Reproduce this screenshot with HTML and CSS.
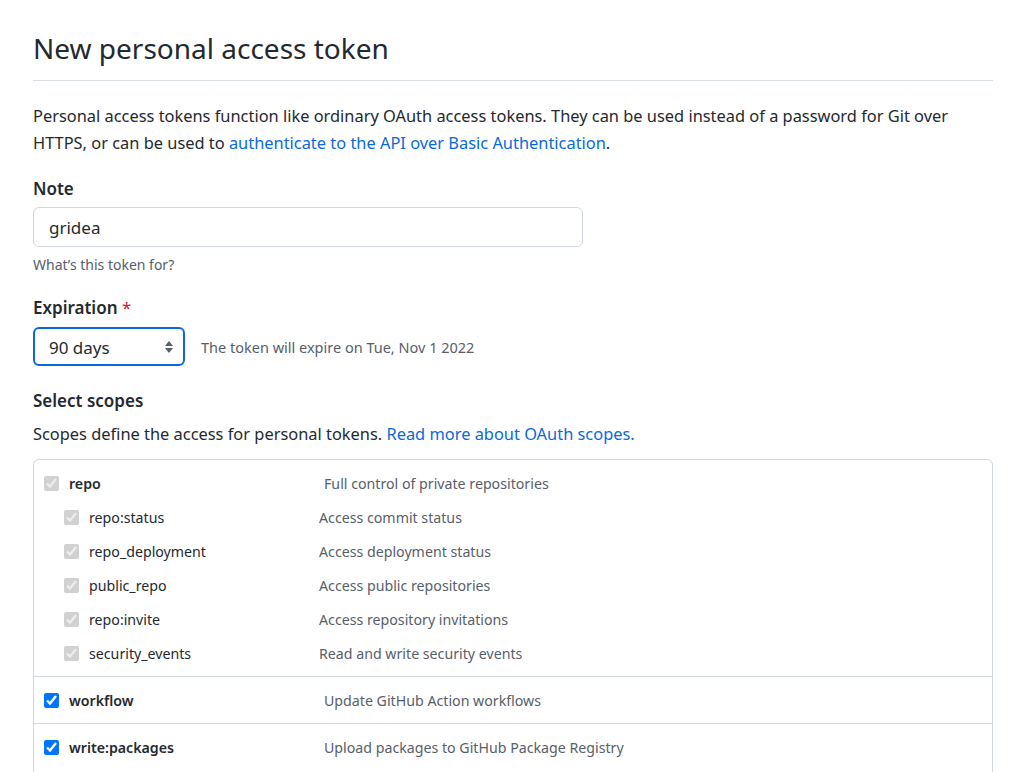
FILE: index.html
```html
<!DOCTYPE html>
<html lang="en">
<head>
<meta charset="utf-8">
<title>New personal access token</title>
<link rel="stylesheet" href="styles.css">
</head>
<body>
<main class="page">
  <h2 class="title">New personal access token</h2>
  <p class="intro">Personal access tokens function like ordinary OAuth access tokens. They can be used instead of a password for Git over HTTPS, or can be used to <a href="#">authenticate to the API over Basic Authentication</a>.</p>

  <div class="field note-field">
    <label class="label">Note</label>
    <input class="text-input" type="text" value="gridea">
    <p class="note">What’s this token for?</p>
  </div>

  <div class="field exp-field">
    <label class="label">Expiration <span class="req">*</span></label>
    <div class="exp-row">
      <div class="select">
        <span>90 days</span>
        <svg class="arrows" width="10" height="14" viewBox="0 0 10 14"><path d="M5 1 L9 6 H1 Z M5 13 L1 8 H9 Z" fill="#57606a"/></svg>
      </div>
      <span class="exp-note">The token will expire on Tue, Nov 1 2022</span>
    </div>
  </div>

  <div class="field scopes-field">
    <label class="label">Select scopes</label>
    <p class="scopes-desc">Scopes define the access for personal tokens. <a href="#">Read more about OAuth scopes.</a></p>
  </div>

  <div class="scopes">
    <div class="group">
      <div class="row top"><input type="checkbox" checked disabled><span class="name">repo</span><span class="desc">Full control of private repositories</span></div>
      <div class="row sub"><input type="checkbox" checked disabled><span class="name">repo:status</span><span class="desc">Access commit status</span></div>
      <div class="row sub"><input type="checkbox" checked disabled><span class="name">repo_deployment</span><span class="desc">Access deployment status</span></div>
      <div class="row sub"><input type="checkbox" checked disabled><span class="name">public_repo</span><span class="desc">Access public repositories</span></div>
      <div class="row sub"><input type="checkbox" checked disabled><span class="name">repo:invite</span><span class="desc">Access repository invitations</span></div>
      <div class="row sub"><input type="checkbox" checked disabled><span class="name">security_events</span><span class="desc">Read and write security events</span></div>
    </div>
    <div class="group">
      <div class="row top"><input type="checkbox" checked><span class="name">workflow</span><span class="desc">Update GitHub Action workflows</span></div>
    </div>
    <div class="group">
      <div class="row top"><input type="checkbox" checked><span class="name">write:packages</span><span class="desc">Upload packages to GitHub Package Registry</span></div>
      <div class="row sub"><input type="checkbox" checked disabled><span class="name">read:packages</span><span class="desc">Download packages from GitHub Package Registry</span></div>
    </div>
  </div>
</main>
</body>
</html>
```
FILE: styles.css
```css
* { box-sizing: border-box; }
html, body { margin: 0; padding: 0; background: #fff; }
body {
  font-family: "Segoe UI", "Noto Sans", "Liberation Sans", sans-serif;
  color: #24292f;
  font-size: 16.4px;
}
.page {
  width: 960px;
  margin-left: 33px;
  padding-top: 28px;
}
.title {
  margin: 0;
  font-size: 28px;
  font-weight: 400;
  line-height: 40px;
  padding-bottom: 12px;
  border-bottom: 1px solid #d8dee4;
}
.intro {
  margin: 21px 0 0;
  line-height: 27px;
  width: 960px;
}
a { color: #0969da; text-decoration: none; }
.label {
  display: block;
  font-weight: 600;
  font-size: 17px;
  line-height: 26px;
}
.note-field { margin-top: 20px; }
.note-field .label { margin-bottom: 5px; }
.exp-field { margin-top: 19px; }
.exp-field .label { margin-bottom: 6px; }
.scopes-field { margin-top: 22px; }
.scopes-field .label { margin-bottom: 7px; }
.req { color: #cf222e; font-weight: 400; }
.text-input {
  display: block;
  width: 550px;
  height: 40px;
  border: 1px solid #d0d7de;
  border-radius: 6px;
  padding: 0 15px;
  font: inherit;
  font-size: 17px;
  color: #24292f;
  outline: none;
}
.note {
  margin: 7px 0 0;
  font-size: 14px;
  line-height: 22px;
  color: #57606a;
}
.exp-row { display: flex; align-items: center; gap: 16px; }
.select {
  width: 152px;
  height: 39px;
  border: 2px solid #0969da;
  border-radius: 6px;
  display: flex;
  align-items: center;
  justify-content: space-between;
  padding: 0 9px 0 14px;
  font-size: 17px;
}
.select span { line-height: 1; padding-top: 2px; }
.exp-note { font-size: 14.5px; color: #57606a; }
.scopes-desc { margin: 0; line-height: 26px; }
.scopes {
  margin-top: 12px;
  border: 1px solid #d0d7de;
  border-radius: 6px;
}
.group { padding: 6px 0 6px; border-top: 1px solid #d0d7de; }
.group:first-child { border-top: none; }
.row {
  display: flex;
  align-items: center;
  height: 34px;
  font-size: 14.2px;
}
.row input {
  width: 15px;
  height: 15px;
  margin: 0 10px 0 0;
  accent-color: #0075ff;
}
.row.top { padding-left: 10px; }
.row.sub { padding-left: 30px; }
.row.top .name { width: 255px; font-weight: 600; }
.row.sub .name { width: 230px; }
.desc { color: #57606a; }
```
